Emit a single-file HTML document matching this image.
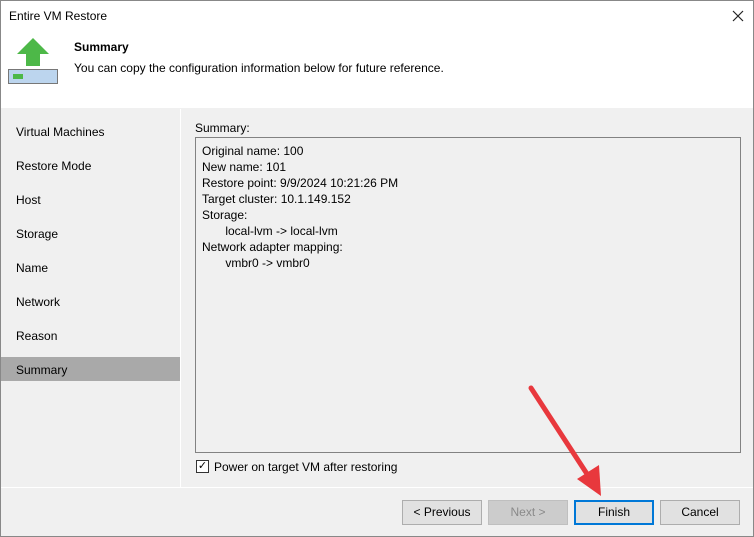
<!DOCTYPE html><html><head><style>
body{margin:0;width:754px;height:537px;overflow:hidden;font-family:"Liberation Sans",sans-serif;font-size:12px;color:#000;}
.win{position:absolute;left:0;top:0;width:752px;height:535px;border:1px solid #888;background:#f0f0f0;}
.abs{position:absolute;}
.nav div{position:absolute;left:15px;}
.btn{position:absolute;top:499px;height:23px;border:1px solid #adadad;background:#e1e1e1;text-align:center;line-height:23px;}
</style></head><body><div class="win">
<div class="abs" style="left:0;top:0;width:752px;height:107px;background:#fff"></div>
<div class="abs" style="left:8px;top:8px">Entire VM Restore</div>
<svg class="abs" style="left:731px;top:9px" width="12" height="12"><path d="M1 1L11 11M11 1L1 11" stroke="#222" stroke-width="1.2"/></svg>
<svg class="abs" style="left:6px;top:36px" width="54" height="50"><polygon points="26,1 42,17 33,17 33,29 19,29 19,17 10,17" fill="#4db848"/><rect x="1.5" y="32.5" width="49" height="14" fill="#bcd5ee" stroke="#777"/><rect x="6" y="37" width="10" height="5" fill="#4db848"/></svg>
<div class="abs" style="left:73px;top:39px;font-weight:bold">Summary</div>
<div class="abs" style="left:73px;top:60px">You can copy the configuration information below for future reference.</div>
<div class="abs" style="left:0;top:108px;width:179px;height:378px;background:#f0f0f0;border-right:1px solid #fff"></div>
<div class="abs" style="left:0;top:356px;width:179px;height:24px;background:#a9a9a9"></div>
<div class="nav">
<div style="top:124px">Virtual Machines</div><div style="top:158px">Restore Mode</div><div style="top:192px">Host</div><div style="top:226px">Storage</div><div style="top:260px">Name</div><div style="top:294px">Network</div><div style="top:328px">Reason</div><div style="top:362px">Summary</div></div>
<div class="abs" style="left:194px;top:120px">Summary:</div>
<div class="abs" style="left:194px;top:136px;border:1px solid #828282;background:#f0f0f0;line-height:16px;padding:5px 0 0 6px;box-sizing:border-box;width:546px;height:316px">Original name: 100<br>New name: 101<br>Restore point: 9/9/2024 10:21:26 PM<br>Target cluster: 10.1.149.152<br>Storage:<br>&nbsp;&nbsp;&nbsp;&nbsp;&nbsp;&nbsp;&nbsp;local-lvm -&gt; local-lvm<br>Network adapter mapping:<br>&nbsp;&nbsp;&nbsp;&nbsp;&nbsp;&nbsp;&nbsp;vmbr0 -&gt; vmbr0</div>
<div class="abs" style="left:195px;top:459px;width:11px;height:11px;border:1px solid #333;background:#fff;font-size:11px;line-height:11px;text-align:center">✓</div>
<div class="abs" style="left:213px;top:459px">Power on target VM after restoring</div>
<div class="abs" style="left:0;top:486px;width:752px;height:1px;background:#fff"></div>
<div class="btn" style="left:401px;width:78px">&lt; Previous</div>
<div class="btn" style="left:487px;width:78px;background:#ccc;border-color:#bfbfbf;color:#8a8a8a">Next &gt;</div>
<div class="btn" style="left:573px;width:76px;height:21px;line-height:21px;border:2px solid #0078d7">Finish</div>
<div class="btn" style="left:659px;width:78px">Cancel</div>
<svg class="abs" style="left:520px;top:380px" width="90" height="120"><line x1="10" y1="7" x2="68" y2="96" stroke="#e8383d" stroke-width="5" stroke-linecap="round"/><polygon points="80,115 56,98 78,84" fill="#e8383d"/></svg>
</div></body></html>
